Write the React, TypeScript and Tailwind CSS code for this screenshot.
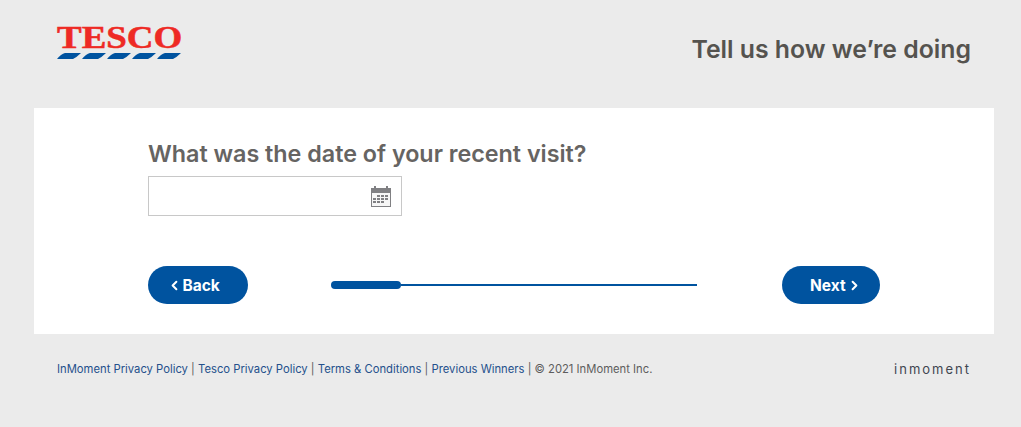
import { ChevronLeft, ChevronRight } from 'lucide-react';

function TescoLogo() {
  return (
    <div className="flex w-[124px] flex-col">
      <div className="h-[28px] origin-left scale-x-[1.155] whitespace-nowrap text-[32px] leading-[28px] font-bold text-[#ee2a24] [-webkit-text-stroke:0.5px_#ee2a24] [font-family:'Liberation_Serif',serif]">
        TESCO
      </div>
      <svg width="124" height="6" viewBox="0 0 124 6" className="mt-[2px] block">
        {[0, 25, 50, 75, 100].map((x) => (
          <path key={x} d={`M${x} 6 Q${x + 4} 1 ${x + 8} 0 H${x + 24} Q${x + 20} 4 ${x + 16} 6 Z`} fill="#00539f" />
        ))}
      </svg>
    </div>
  );
}

function CalendarIcon() {
  return (
    <svg width="20" height="21" viewBox="0 0 20 21" className="block">
      <path d="M0 2h3V0h2V2h10V0h2V2h3v19H0z" fill="#808083" />
      <rect x="1" y="7" width="18" height="13" fill="#f6f6f6" />
      {[9, 12, 15].map((y) =>
        [2, 6, 10, 14].map((x) =>
          (y === 9 && x < 6) || (y === 15 && x > 10) ? null : (
            <rect key={`${x}-${y}`} x={x} y={y} width="3" height="2" fill="#808083" />
          ),
        ),
      )}
    </svg>
  );
}

function PillButton({ label, dir }: { label: string; dir: 'back' | 'next' }) {
  return (
    <button
      className={`flex h-[38px] items-center rounded-[19px] bg-[#00539f] text-[15.5px] font-bold text-white ${
        dir === 'back' ? 'w-[100px] gap-[1px] pl-[18.5px]' : 'w-[98px] gap-[1px] pl-[28px]'
      }`}
    >
      {dir === 'back' && <ChevronLeft size={15} strokeWidth={3.2} />}
      <span className="pt-[2px]">{label}</span>
      {dir === 'next' && <ChevronRight size={15} strokeWidth={3.2} />}
    </button>
  );
}

const links = ['InMoment Privacy Policy', 'Tesco Privacy Policy', 'Terms & Conditions', 'Previous Winners'];

export default function App() {
  return (
    <div className="h-[427px] w-[1021px] overflow-hidden bg-[#ebebeb] [font-family:Inter,sans-serif]">
      <header className="flex h-[108px] items-start justify-between pr-[50px] pl-[57px]">
        <div className="pt-[23px]">
          <TescoLogo />
        </div>
        <h1 className="pt-[34px] text-[24.8px] leading-[30px] font-semibold text-[#55534f]">Tell us how we’re doing</h1>
      </header>

      <main className="mx-[34px] h-[226px] w-[960px] bg-white px-[114px] pt-[31px]">
        <h2 className="text-[23.3px] leading-[30px] font-semibold text-[#666462]">What was the date of your recent visit?</h2>
        <div className="mt-[7px] flex h-[40px] w-[254px] items-center justify-end border border-[#c8c8c8] pr-[10px]">
          <CalendarIcon />
        </div>
        <div className="mt-[50px] flex items-center justify-between">
          <PillButton label="Back" dir="back" />
          <div className="mr-[2px] flex w-[366px] items-center">
            <div className="h-[8px] w-[70px] rounded-full bg-[#00539f]" />
            <div className="h-[2px] flex-1 bg-[#00539f]" />
          </div>
          <PillButton label="Next" dir="next" />
        </div>
      </main>

      <footer className="flex items-center justify-between pt-[27px] pr-[50px] pl-[57px]">
        <p className="text-[11.26px] leading-[17px] whitespace-nowrap text-[#5d5d5d]">
          {links.map((link) => (
            <span key={link}>
              <a className="text-[#24508c]">{link}</a>
              {' | '}
            </span>
          ))}
          © 2021 InMoment Inc.
        </p>
        <span className="text-[13px] leading-[17px] tracking-[2px] text-[#3f4650]">inmoment</span>
      </footer>
    </div>
  );
}
